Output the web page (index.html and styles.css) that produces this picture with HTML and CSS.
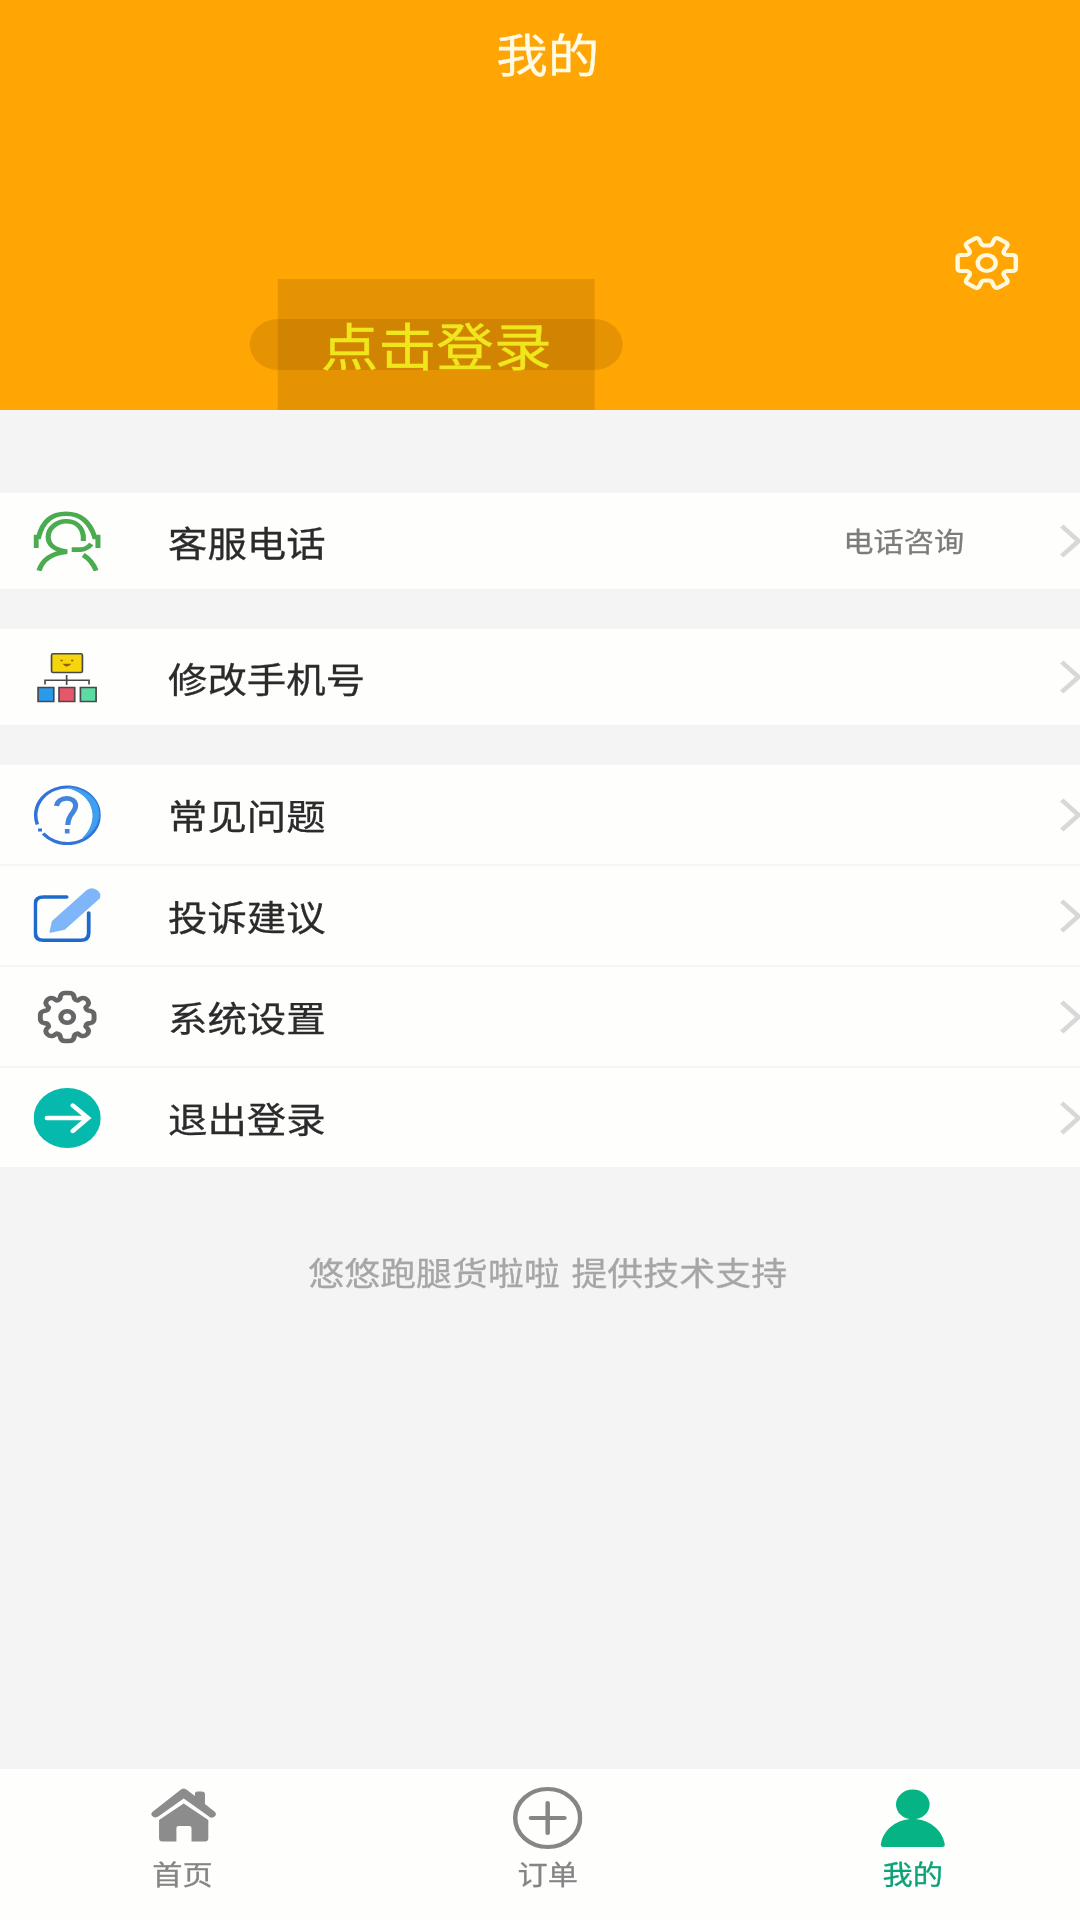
FILE: index.html
```
<!DOCTYPE html>
<html lang="zh-CN">
<head>
    <meta charset="UTF-8">
    <meta name="viewport" content="width=device-width, initial-scale=1.0">
    <title>我的</title>
    <link rel="stylesheet" href="styles.css">
</head>
<body>

    <div class="app">
        <header class="header">
            <h1>我的</h1>
            <div class="user">
                <div class="login"><span class="login-btn">点击登录</span></div>
                <svg class="gear" viewBox="-30 -30 60 60">
                    <path d="M23-8Q26-8 26-5V5Q26 8 23 8H18Q14 9 15.500 12.500L18 16.500Q19.500 19 17 20.500L10.500 24.500Q8 26 6.500 23L5 19.500Q4 17.500 2 17.500H-2Q-4 17.500-5 19.500L-6.500 23Q-8 26-10.500 24.500L-17 20.500Q-19.500 19-18 16.500L-15.500 12.500Q-14 9-18 8H-23Q-26 8-26 5V-5Q-26-8-23-8H-18Q-14-9-15.500-12.500L-18-16.500Q-19.500-19-17-20.500L-10.500-24.500Q-8-26-6.500-23L-5-19.500Q-4-17.500-2-17.500H2Q4-17.500 5-19.500L6.500-23Q8-26 10.500-24.500L17-20.500Q19.500-19 18-16.500L15.500-12.500Q14-9 18-8Z"/>
                    <circle r="8"/>
                </svg>
            </div>
        </header>

        <main>
            <!-- Service client -->
            <div class="group">
                <div class="row">
                    <svg class="icon" viewBox="0 0 60 60" fill="none" stroke="#4bab50" stroke-width="4.6">
                        <path d="M2.2 37V26H4.5C8 10 17 2.7 29 2.7S50 10 54.5 26H57.5V37"/>
                        <path d="M44.4 30V25C43 15 37 10.3 29 10.3S13 17 13 26C13 33 18 39 30 40.7C17 42 8 48 4.8 59.7"/>
                        <path d="M34 38.6H42Q48 38 51.5 33M44.2 44Q52 49 55.8 59.7"/>
                    </svg>
                    <span class="label">客服电话</span>
                    <span class="value">电话咨询</span>
                    <svg class="arrow" viewBox="0 0 20 36"><path d="M2 3 17 18 2 33"/></svg>
                </div>
            </div>

            <!-- Numéro de téléphone -->
            <div class="group">
                <div class="row">
                    <svg class="icon" viewBox="0 0 60 60" fill="none" stroke="#4a484b" stroke-width="1.5">
                        <rect x="16" y="6.8" width="27.6" height="18.6" rx="1.5" fill="#f5d60d"/>
                        <path d="M29.5 28V38M10.2 37.5V33.3H49.5V37.5"/>
                        <path d="M24 13.5H26M33.5 13.5H35.5M27.5 17.5Q29.7 20 32 17.5Z" stroke="#9a5a10"/>
                        <rect x="4" y="40.5" width="14" height="14" fill="#2a9bea"/>
                        <rect x="22.7" y="40.5" width="14" height="14" fill="#e65769"/>
                        <rect x="41.8" y="40.5" width="14" height="14" fill="#5ddba5"/>
                    </svg>
                    <span class="label">修改手机号</span>
                    <svg class="arrow" viewBox="0 0 20 36"><path d="M2 3 17 18 2 33"/></svg>
                </div>
            </div>

            <div class="group list">
                <div class="row">
                    <svg class="icon" viewBox="0 0 60 60" fill="none" stroke="#3273d9" stroke-width="3.2">
                        <path d="M8.5 48.5A28.3 28.3 0 1 0 3.4 39.5"/>
                        <path d="M31 2.500C63 6 66 40 44 53C59 37 56 11 31 2.500Z" fill="#3f9ff0" stroke="#3f9ff0" stroke-width="1"/>
                        <path d="M20.500 21C22 11 36.500 11 37.500 20C38 28 31 27 30.5 40" stroke="#4285dc" stroke-width="4.6"/>
                        <path d="M30 44V48.5" stroke="#4285dc" stroke-width="4.2"/>
                        <path d="M4 45H7.500"/>
                    </svg>
                    <span class="label">常见问题</span>
                    <svg class="arrow" viewBox="0 0 20 36"><path d="M2 3 17 18 2 33"/></svg>
                </div>
                <div class="row">
                    <svg class="icon" viewBox="0 0 60 60" fill="none">
                        <path d="M29.5 11H9Q1.5 11 1.5 18V47Q1.5 54.3 9 54.3H42Q49.2 54.3 49.2 47V27" stroke="#1f6bcb" stroke-width="3.4" stroke-linecap="round"/>
                        <path d="M15 46 17 35.5 48 4.5Q52 1.5 56 4.5T58.5 12L27.5 43Z" fill="#7fb5f9" stroke="#7fb5f9" stroke-width="1.5" stroke-linejoin="round"/>
                    </svg>
                    <span class="label">投诉建议</span>
                    <svg class="arrow" viewBox="0 0 20 36"><path d="M2 3 17 18 2 33"/></svg>
                </div>
                <div class="row">
                    <svg class="icon" viewBox="-30 -30 60 60" fill="none" stroke="#666" stroke-width="4.4" stroke-linejoin="round">
                        <path d="M21-6Q24-5 24-2V2Q24 5 21 6Q17 6 16.500 9.500L18.500 12Q20 15 17.500 17.500T12 18.500L9.500 16.500Q6 17 6 21Q5 24 2 24H-2Q-5 24-6 21Q-6 17-9.500 16.500L-12 18.500Q-15 20-17.500 17.500T-18.500 12L-16.500 9.500Q-17 6-21 6Q-24 5-24 2V-2Q-24-5-21-6Q-17-6-16.500-9.500L-18.500-12Q-20-15-17.500-17.500T-12-18.500L-9.500-16.500Q-6-17-6-21Q-5-24-2-24H2Q5-24 6-21Q6-17 9.500-16.500L12-18.500Q15-20 17.500-17.500T18.500-12L16.500-9.500Q17-6 21-6Z"/>
                        <circle r="5.8"/>
                    </svg>
                    <span class="label">系统设置</span>
                    <svg class="arrow" viewBox="0 0 20 36"><path d="M2 3 17 18 2 33"/></svg>
                </div>
                <div class="row">
                    <svg class="icon" viewBox="0 0 60 60" fill="none">
                        <circle cx="30" cy="30" r="30" fill="#05b9ad"/>
                        <path d="M12 30H48M35 17.5 48.5 30 35 43" stroke="#fff" stroke-width="4.4" stroke-linecap="round"/>
                    </svg>
                    <span class="label">退出登录</span>
                    <svg class="arrow" viewBox="0 0 20 36"><path d="M2 3 17 18 2 33"/></svg>
                </div>
            </div>

            <p class="support">悠悠跑腿货啦啦 提供技术支持</p>
        </main>

        <nav class="tabs">
            <div class="tab">
                <svg viewBox="-1 0 62 66" fill="#8c8c8c">
                    <path d="M3 27 28 5Q31 2 34 5L41 11V9Q41 6.500 43 6.500H47Q50 6.500 50 9V19L59 27Q61 30 58 32T53 31L31 13.500 9 31Q6 33.500 3.500 31.500T3 27Z"/>
                    <path d="M9 35 31 18.500 53 35V53Q53 56.500 50 56.500H38V43Q38 41 36 41H26.500Q24.500 41 24.500 43V56.500H12Q9 56.500 9 53Z"/>
                </svg>
                <span>首页</span>
            </div>
            <div class="tab">
                <svg viewBox="0 0 62 66" fill="none" stroke="#868686" stroke-width="4">
                    <circle cx="31" cy="33" r="29"/>
                    <path d="M16 33H46M31 18V48" stroke-linecap="round"/>
                </svg>
                <span>订单</span>
            </div>
            <div class="tab active">
                <svg viewBox="0 0 62 66" fill="#06b385">
                    <circle cx="31" cy="19.500" r="15"/>
                    <path d="M2.500 59C5 44 17 34 31 34S57 44 59.500 59Q60 62 57 62H5Q2 62 2.500 59Z"/>
                </svg>
                <span>我的</span>
            </div>
        </nav>
    </div>

</body>
</html>
```
FILE: styles.css
```
body {
    margin: 0;
    width: 1080px;
    height: 1920px;
    overflow: hidden;
    background-color: #f4f4f4;
    font-family: "Noto Sans CJK SC", sans-serif;
}
/* la page est étirée en largeur */
.app {
    display: flex;
    flex-direction: column;
    width: 978px;
    height: 1920px;
    transform: scaleX(1.12);
    transform-origin: left top;
    -webkit-text-stroke: 0.3px;
}
.header {
    height: 410px;
    background-color: #ffa504;
    color: #fffbe8;
}
h1 {
    margin: 0;
    height: 110px;
    line-height: 104px;
    font-size: 46px;
    font-weight: 400;
    text-align: center;
}
.user {
    display: flex;
    height: 300px;
}
.login {
    display: flex;
    justify-content: center;
    align-items: center;
    align-self: flex-end;
    width: 283px;
    height: 131px;
    margin-left: 248px;
    background-color: rgba(60, 30, 0, 0.13);
}
.login-btn {
    flex-shrink: 0;
    width: 333px;
    height: 51px;
    line-height: 49px;
    border-radius: 26px;
    background-color: rgba(60, 30, 0, 0.13);
    color: #efe61c;
    font-size: 51.5px;
    text-align: center;
}
.gear {
    width: 60px;
    height: 60px;
    margin: 123px 67px 0 auto;
    fill: none;
    stroke: #fff8dc;
    stroke-width: 4;
    stroke-linejoin: round;
}
main {
    flex: 1;
    padding-top: 83px;
}
.group {
    margin-bottom: 40px;
    background-color: #fefefd;
}
.row {
    display: flex;
    align-items: center;
    height: 96px;
    padding: 0 12px 0 30px;
}
.list {
    margin-bottom: 0;
}
.list .row {
    height: 99px;
}
.list .row + .row {
    border-top: 2px solid #f5f5f5;
}
.icon {
    width: 60px;
    height: 60px;
    margin-right: 60px;
}
.label {
    color: #2b2b2b;
    font-size: 35.2px;
}
.value {
    margin-left: auto;
    margin-right: 85px;
    padding-bottom: 2px;
    color: #7c7c7c;
    font-size: 27px;
}
.arrow {
    width: 20px;
    height: 36px;
    margin-left: auto;
    fill: none;
    stroke: #d8d8d8;
    stroke-width: 4.4;
}
.value + .arrow {
    margin-left: 0;
}
.support {
    margin: 81px 0 0;
    color: #a6a6a6;
    font-size: 32px;
    letter-spacing: 0.1px;
    word-spacing: 3px;
    text-align: center;
}
.tabs {
    display: flex;
    height: 151px;
    background-color: #fefefd;
}
.tab {
    display: flex;
    flex: 1;
    flex-direction: column;
    align-items: center;
    padding-top: 16px;
    color: #858585;
    font-size: 27px;
    line-height: 46px;
}
.tab svg {
    width: 62px;
    height: 66px;
}
.tab.active {
    color: #0ba277;
}
```
